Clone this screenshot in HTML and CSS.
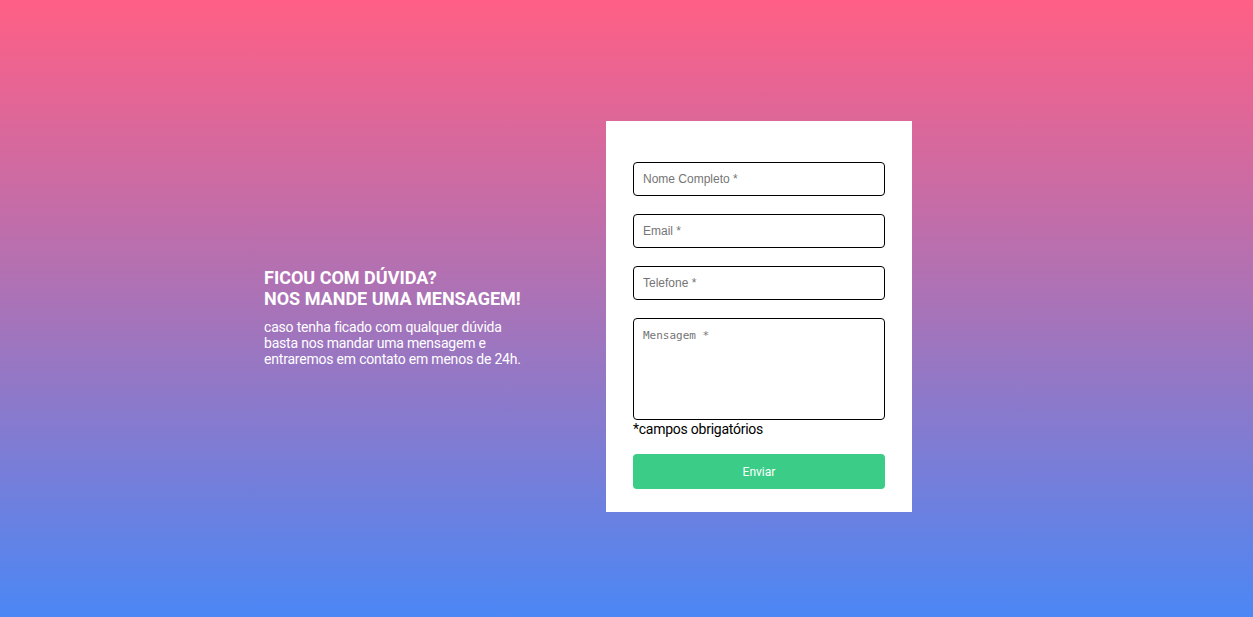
FILE: index.html
```html
<!DOCTYPE html>
<html lang="pt-BR">
<head>
<meta charset="utf-8">
<title>Contato</title>
<link rel="stylesheet" href="styles.css">
</head>
<body>
<main class="page">
  <section class="intro">
    <h1 class="intro-title">FICOU COM DÚVIDA?<br>NOS MANDE UMA MENSAGEM!</h1>
    <p class="intro-text">caso tenha ficado com qualquer dúvida<br>basta nos mandar uma mensagem e<br>entraremos em contato em menos de 24h.</p>
  </section>
  <form class="card">
    <input class="field" type="text" placeholder="Nome Completo *">
    <input class="field" type="email" placeholder="Email *">
    <input class="field" type="tel" placeholder="Telefone *">
    <textarea class="field area" placeholder="Mensagem *"></textarea>
    <p class="note">*campos obrigatórios</p>
    <button class="send" type="button">Enviar</button>
  </form>
</main>
</body>
</html>
```
FILE: styles.css
```css
* { box-sizing: border-box; }
html, body { height: 100%; }
body {
  margin: 0;
  background: linear-gradient(to bottom, #ff5f85 0%, #a873b8 50%, #4b87f5 100%);
  font-family: Roboto, "Liberation Sans", sans-serif;
}
.page {
  height: 617px;
  display: flex;
  align-items: center;
  justify-content: flex-start;
  padding: 16px 0 0 264px;
  gap: 85px;
}
.intro { width: 257px; color: #fff; white-space: nowrap; }
.intro-title {
  margin: 0 0 10px;
  font-size: 18px;
  line-height: 21px;
  font-weight: 700;
}
.intro-text {
  margin: 0;
  font-size: 14px;
  line-height: 16px;
  letter-spacing: -0.2px;
}
.card {
  width: 306px;
  background: #fff;
  padding: 41px 27px 23px;
  display: flex;
  flex-direction: column;
}
.field {
  width: 252px;
  height: 34px;
  border: 1px solid #000;
  border-radius: 4px;
  padding: 0 9px;
  margin: 0 0 18px;
  font-family: "Liberation Sans", Arial, sans-serif;
  font-size: 12px;
  color: #333;
  outline: none;
}
.field::placeholder { color: #757575; }
.area {
  height: 102px;
  margin: 0;
  padding: 10px 9px;
  resize: none;
  font-family: "DejaVu Sans Mono", monospace;
  font-size: 11px;
}
.note {
  margin: 0;
  font-size: 14px;
  line-height: 18px;
  letter-spacing: -0.25px;
  color: #000;
}
.send {
  margin-top: 16px;
  height: 35px;
  border: none;
  border-radius: 4px;
  background: #3bcd87;
  color: #fff;
  font-family: Roboto, "Liberation Sans", sans-serif;
  font-size: 12px;
}
```
